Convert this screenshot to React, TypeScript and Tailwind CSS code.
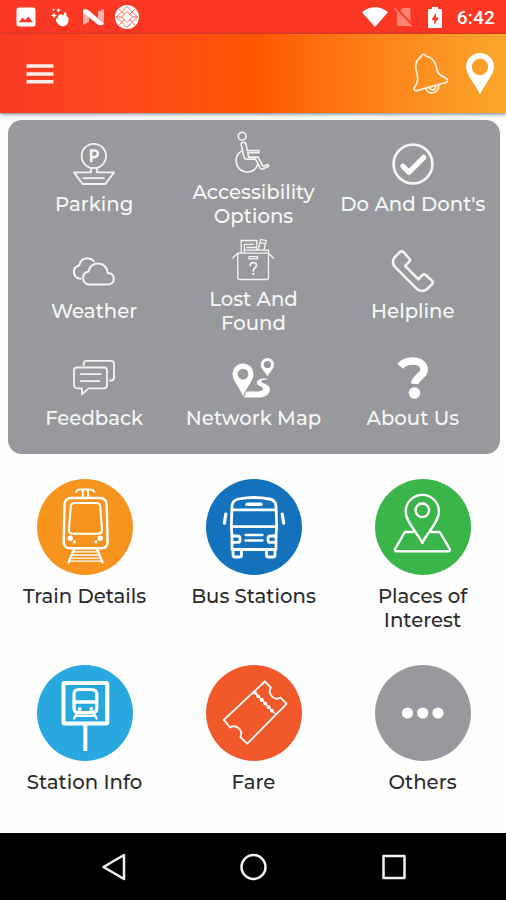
import type { ReactNode } from 'react';

type Item = {
  label: string[];
  icon: ReactNode;
};

type Service = Item & { color: string };

// 42x42 line icon used inside the grey panel
const PanelIcon = ({ width = 1.6, children }: { width?: number; children: ReactNode }) => (
  <svg
    className="h-[42px] w-[42px] shrink-0 overflow-visible"
    viewBox="0 0 42 42"
    fill="none"
    stroke="#f4f4f5"
    strokeWidth={width}
    strokeLinecap="round"
    strokeLinejoin="round"
  >
    {children}
  </svg>
);

// 96x96 icon drawn on the coloured discs
const DiscIcon = ({ width = 2.4, children }: { width?: number; children: ReactNode }) => (
  <svg
    className="h-24 w-24"
    viewBox="0 0 96 96"
    fill="none"
    stroke="#fff"
    strokeWidth={width}
    strokeLinecap="round"
    strokeLinejoin="round"
  >
    {children}
  </svg>
);

const quickLinks: Item[] = [
  {
    label: ['Parking'],
    icon: (
      <PanelIcon width={1.8}>
        <circle cx="20.8" cy="13" r="12.2" />
        <path d="M18.2 19.2V7.5h3.4a3.3 3.3 0 0 1 0 6.6h-3.4" strokeWidth="2.6" strokeLinecap="butt" strokeLinejoin="miter" />
        <path d="M18 25v4.4H1L9.6 41h22.8L41 29.4H24V25M10.4 35.2h20.4" />
      </PanelIcon>
    ),
  },
  {
    label: ['Accessibility', 'Options'],
    icon: (
      <PanelIcon width={1.6}>
        <circle cx="10.2" cy="5.3" r="3.9" />
        <path d="M11 11.3c-1.3.2-2 1.3-1.7 2.8L12 26.4c.3 1.2 1.1 1.7 2.2 1.7h9.3l4.7 9.1c.6 1.1 1.6 1.3 2.6.8l6-2.7-.9-1.8-5 2-4.7-9.4h-9.5l-.9-4.4h11v-2.1H15.3l-1.2-5.7c-.4-1.8-1.5-2.8-3.1-2.6z" />
        <path d="M9 20.4c-3.2 2.1-4.9 5.1-4.9 9C4.100 36 8.8 41 15.2 41c5.4 0 9.3-3.2 10.6-8.2" />
      </PanelIcon>
    ),
  },
  {
    label: ["Do And Dont's"],
    icon: (
      <PanelIcon width={2.7}>
        <circle cx="21" cy="21" r="19.4" />
        <path d="m10.9 23.2 5.9 6.1 15-15" strokeWidth="5.2" stroke="#fff" />
      </PanelIcon>
    ),
  },
  {
    label: ['Weather'],
    icon: (
      <PanelIcon width={2}>
        <path d="M16.2 34.5h18.9c3.2 0 5.7-2.5 5.7-5.6 0-3.3-2.4-5.6-6.1-5.8-.5-5.9-4.4-9.7-9.6-9.7-5 0-8.6 3.2-9.4 8.1-3.5.5-5.6 3-5.6 6.3 0 3.8 2.5 6.7 6.1 6.7z" />
        <path d="M7.5 28.7C3.500 28.1.9 25.5.9 21.9c0-3.3 1.9-5.6 5.2-6.3C7 11 10.1 8.2 14.2 8.2c2.7 0 5 1 6.7 3" />
      </PanelIcon>
    ),
  },
  {
    label: ['Lost And', 'Found'],
    icon: (
      <PanelIcon width={1.3}>
        <path d="M5.8 15.2h30.7v24.3c0 1.3-.7 2-2 2H7.8c-1.3 0-2-.7-2-2zM5.8 15.2.8 19.8M36.5 15.2l4.9 5" />
        <path d="M9.2 15V2.5h15.5V12M12.4 15V6.3h8.8M12.4 12.2h24.1v3M15 9.5h9" />
        <path d="m26.3 12 2.3-10.6 5.6 1.2L32 12M28 4.6l5.6 1.2" />
        <path d="M17 18.6h8.5v2.2H17z" />
        <path d="M18.2 27.6c0-4 6.3-4 6.3 0 0 2.5-3.2 2.4-3.2 5.2" strokeWidth="1.7" />
        <circle cx="21.3" cy="36" r=".6" />
      </PanelIcon>
    ),
  },
  {
    label: ['Helpline'],
    icon: (
      <PanelIcon width={2.6}>
        <path d="M2.7 7.3 7.5 2.3c1.4-1.3 3-1.3 4.3 0l5.6 6.5c1 1.2.9 2-.2 3.1l-4.1 4L26.4 29.3l3.9-4.1c1.1-1.1 2.2-1.2 3.4-.2l6.2 5.6c1.2 1.2 1.2 2.5 0 3.7l-5 4.9c-3 2.6-7.6 2.4-10.6-.8L3.3 17.2C.6 14.4.1 10.2 2.7 7.3z" />
      </PanelIcon>
    ),
  },
  {
    label: ['Feedback'],
    icon: (
      <PanelIcon width={1.8}>
        <path d="M4 10.5h27c1.8 0 3 1.2 3 3v14.8c0 1.8-1.2 3-3 3H15.6l-6.7 6v-6H4c-1.8 0-3-1.2-3-3V13.5c0-1.8 1.2-3 3-3z" />
        <path d="M10.6 8V6.8c0-1.8 1.2-3 3-3H38c1.8 0 3 1.2 3 3v13.8c0 1.8-1.2 3-3 3h-1.2" />
        <path d="M7.8 17.2h20M7.8 24.2h18.4" />
      </PanelIcon>
    ),
  },
  {
    label: ['Network Map'],
    icon: (
      <svg className="h-[42px] w-[42px] shrink-0" viewBox="0 0 42 42" fill="#fff" fillRule="evenodd">
        <path d="M11 6.5A10.5 10.5 0 0 0 .5 17c0 7 7.5 13.5 10.5 22.5C14 30.5 21.5 24 21.5 17A10.5 10.5 0 0 0 11 6.5zm0 5.2a5.4 5.4 0 1 1 0 10.8 5.4 5.4 0 0 1 0-10.8z" />
        <path d="M35.5.9A6.8 6.8 0 0 0 28.7 7.7c0 4.5 4.8 7 6.8 11.8 2-4.8 6.5-7.3 6.5-11.8A6.6 6.6 0 0 0 35.5.9zm0 3a3.7 3.7 0 1 1 0 7.4 3.7 3.7 0 0 1 0-7.4z" />
        <path d="M34.8 21.5c-5.4-.6-10.2 1-10 4.2.2 3.4 6.7 3.6 6.2 6.2-.4 2.1-4 2.7-8 2.5H14.2L12 40.5h12.5c8.5.2 13.3-2.6 13.5-8.5.1-4.6-9-5.5-8.8-7.7.1-1.2 2.3-1.7 5.6-1.6z" />
      </svg>
    ),
  },
  {
    label: ['About Us'],
    icon: (
      <PanelIcon width={7.6}>
        <path
          d="M8.2 9.3C11.3 5.4 15.5 4 20.5 4c6.7 0 11.7 3.2 11.7 8.7 0 6-8.8 7.3-9.5 14.2"
          stroke="#fff"
          strokeLinecap="butt"
        />
        <circle cx="22.5" cy="36" r="5.8" fill="#fff" stroke="none" />
      </PanelIcon>
    ),
  },
];

const services: Service[] = [
  {
    label: ['Train Details'],
    color: 'bg-[#f7941e]',
    icon: (
      <DiscIcon>
        <path d="M39 12.8c.8-1.5 1.8-2.3 3.5-2.3h11.2c1.7 0 2.7.8 3.5 2.3M45.8 10.5V18M51 10.5V18" strokeWidth="2" />
        <path d="M34.5 19h28c4.4 0 6.9 2.3 7.2 6.5l.9 37.2c0 4.2-2.4 6.5-6.5 6.5H33c-4.1 0-6.4-2.3-6.3-6.5l.8-37.2c.3-4.2 2.6-6.5 7-6.5z" />
        <path d="M37.5 24h22c2.4 0 3.6 1.2 3.8 3.6l1.7 22.8c.2 2.9-1.3 4.4-4 4.4H36c-2.7 0-4.2-1.5-4-4.4l1.7-22.8c.2-2.4 1.4-3.6 3.8-3.6z" strokeWidth="2.1" />
        <path d="m37.3 69.8-5.7 13.5M60 69.8l5.4 13.5" />
        <path d="M37 72.8h23.5M36 76h26M35 79.2h28M33.5 82.2h30" strokeWidth="1.3" />
        <g fill="#fff" stroke="none">
          <circle cx="33.3" cy="59.2" r="2.7" />
          <circle cx="37.5" cy="62.9" r="1.7" />
          <circle cx="63.2" cy="59.2" r="2.7" />
          <circle cx="59" cy="62.9" r="1.7" />
        </g>
      </DiscIcon>
    ),
  },
  {
    label: ['Bus Stations'],
    color: 'bg-[#1472bd]',
    icon: (
      <DiscIcon width={2.8}>
        <path d="M26 70.5V56l-.7-8.5.7-20.5c.3-4 2.7-6.2 6.5-7 10.5-2 20.5-2 31 0 3.8.8 6.2 3 6.5 7l.7 20.5L70 56v14.5z" />
        <path d="M26.5 30.8h43M25.5 47.7h45" />
        <path d="M41 25.2h14" strokeWidth="3.4" />
        <path d="M26 57h5.5c1.6 0 2.5.9 2.5 2.5v1.4c0 1.6-.9 2.5-2.5 2.5H26M70 57h-5.5c-1.6 0-2.5.9-2.5 2.5v1.4c0 1.6.9 2.5 2.5 2.5H70" />
        <path d="M39.5 56h17M39.5 61.5h17" strokeWidth="2.3" />
        <path d="M27 71v5c0 1.3.7 2 2 2h4.5c1.3 0 2-.7 2-2v-5M60.5 71v5c0 1.3.7 2 2 2H67c1.3 0 2-.7 2-2v-5" />
        <path d="m19.8 35-1.5 9.2M76.2 35l1.5 9.2" strokeWidth="3.2" />
      </DiscIcon>
    ),
  },
  {
    label: ['Places of', 'Interest'],
    color: 'bg-[#39b54a]',
    icon: (
      <DiscIcon>
        <path d="M47.3 64C43.5 55 30.7 43.5 30.7 32.5a16.6 16.6 0 0 1 33.2 0C63.9 43.5 51.1 55 47.3 64z" />
        <circle cx="47.3" cy="31.3" r="6.8" />
        <path d="M38.5 53h-8.7L20.2 69.8c-.7 1.4-.2 2.5 1.4 2.5h51.6c1.6 0 2.1-1.1 1.4-2.5L64.8 53h-8.5" />
      </DiscIcon>
    ),
  },
  {
    label: ['Station Info'],
    color: 'bg-[#29a8e0]',
    icon: (
      <DiscIcon width={4}>
        <rect x="26.5" y="18" width="43.8" height="40.5" rx="1" />
        <path d="M48.3 59v27" strokeLinecap="butt" />
        <path
          d="M42 24.5h12.8c3.3 0 5 2 5 5.3v13.4c0 2.8-1.4 4.3-4.3 4.3H41.3c-2.9 0-4.3-1.5-4.3-4.3V29.8c0-3.3 1.7-5.3 5-5.3z"
          strokeWidth="3.2"
        />
        <path d="M38 37h21" strokeWidth="3.4" />
        <path d="m39.5 49-2.3 4.5M57.3 49l2.3 4.5M39.5 50.8h17.8" strokeWidth="2.4" />
        <path d="M42.7 44v.1M54.3 44v.1" strokeWidth="4" />
      </DiscIcon>
    ),
  },
  {
    label: ['Fare'],
    color: 'bg-[#f1592a]',
    icon: (
      <DiscIcon width={1.8}>
        <path d="m17.8 54.9 41-38.4 6 6.2c-3.6 5.7 3.2 13.8 9.8 9.9l6 6.2-39.4 39.9-6.8-6.6c3-6.2-3.5-13.6-10.3-9.6z" />
        <path d="m48.8 27.6 20.6 21.6" strokeWidth="3.8" strokeDasharray="0.1 4.9" />
        <path d="m48.8 27.6 20.6 21.6" strokeWidth="1.2" />
      </DiscIcon>
    ),
  },
  {
    label: ['Others'],
    color: 'bg-[#97999d]',
    icon: (
      <DiscIcon>
        <g fill="#fff" stroke="none">
          <circle cx="32.5" cy="48" r="5.6" />
          <circle cx="47.7" cy="48" r="5.6" />
          <circle cx="63" cy="48" r="5.6" />
        </g>
      </DiscIcon>
    ),
  },
];

const StatusBar = () => (
  <div className="flex h-[34px] shrink-0 items-center justify-between bg-[#fb3824] pr-[11px] pl-4">
    <div className="flex items-center">
      <svg className="h-5 w-5" viewBox="0 0 20 20">
        <rect x=".5" y=".5" width="19" height="19" rx="2.5" fill="#fff" />
        <path d="m3 15.2 3.5-4.6 2.5 2.7 3.3-3.9 4.7 5.8z" fill="#fb3824" />
      </svg>
      <svg className="ml-[15px] h-5 w-[18px]" viewBox="0 0 18 20" fill="#fff">
        <path d="M8.8 7.5c1.5-1.2 2.5-.2 3.5 1l.8-2.3c.4-1.4 2.3-1 2.3.4v2.9c1.8.1 2.3 1.3 2.2 3-.2 4.8-3 7-6.4 6.8-3.4-.3-5.6-3.3-6.3-6.2-.3-1.5.8-2 1.8-1.3-.4-1.7.6-3.6 2.1-4.3z" />
        <path d="m3 5.5.9 2.1L6 8.5l-2.1.9L3 11.5l-.9-2.1L0 8.5l2.1-.9zM7.5 1l.7 1.6 1.6.7-1.6.7-.7 1.6-.7-1.6-1.6-.7 1.6-.7zM2.5 1l.5 1.2 1.2.5-1.2.5-.5 1.2L2 3.2.8 2.7 2 2.2z" />
      </svg>
      <svg className="ml-3.5 h-5 w-[21px]" viewBox="0 0 21 20" fill="#fff">
        <path d="m0 4 6 4.5V15L0 18zM21 2v14l-6-4.5V4.5z" opacity=".6" />
        <path d="M0 3.5C0 1.8 4 1.7 5.5 3.3L21 16.5c-1.2 2-4.5 2.5-6.2 1L0 5.5z" />
      </svg>
      <svg className="ml-[11px] h-6 w-6" viewBox="0 0 24 24">
        <circle cx="12" cy="12" r="12" fill="#fff" />
        <path
          d="m12 1.5 10.5 10.5L12 22.5 1.5 12zM12 6.5l5.5 5.5-5.5 5.5L6.5 12zM4 4l5.3 5.3M20 4l-5.3 5.3M4 20l5.3-5.3M20 20l-5.3-5.3M1 12h5.5M17.5 12H23"
          fill="none"
          stroke="#fb6a58"
          strokeWidth="1"
        />
      </svg>
    </div>
    <div className="flex items-center">
      <svg className="h-5 w-[26px]" viewBox="0 0 26 20" fill="#fff">
        <path d="M0 5.2C7.5-1.4 18.5-1.4 26 5.2L13 20z" />
      </svg>
      <svg className="ml-1.5 h-5 w-[19px]" viewBox="0 0 19 20">
        <path d="M8.5 1H15c1 0 1.5.5 1.5 1.5v15c0 1-.5 1.5-1.5 1.5H4.5C3.5 19 3 18.5 3 17.5V7z" fill="#fd8373" />
        <path d="M1.5.8 18.5 19" stroke="#fb3824" strokeWidth="3" />
        <path d="M.5 1.5 17.5 19.5" stroke="#fd8373" strokeWidth="1.5" />
      </svg>
      <svg className="ml-[15px] h-[21px] w-3.5" viewBox="0 0 14 21">
        <path d="M4 0h6v2h2.5C13.5 2 14 2.5 14 3.5v16c0 1-.5 1.5-1.5 1.5h-11C.5 21 0 20.5 0 19.5v-16C0 2.5.5 2 1.5 2H4z" fill="#fff" />
        <path d="M8 5.5 3.5 13H6.3v5l4.5-7.5H8z" fill="#fb3824" />
      </svg>
      <span className="ml-[15px] pt-0.5 font-['Roboto',sans-serif] text-[19px] leading-5 font-medium tracking-[0.2px] text-white">
        6:42
      </span>
    </div>
  </div>
);

const Header = () => (
  <header className="z-10 flex h-[79px] shrink-0 items-center justify-between bg-linear-to-r from-[#fb3a25] via-[#ff5500] to-[#f9a72b] pr-3 pl-[26px] shadow-[0_1px_4px_rgba(40,60,70,0.7)]">
    <svg className="h-5 w-7" viewBox="0 0 28 20" fill="#fdeeea">
      <path d="M.5.3h27v3.5H.5zM.5 8.2h27v3.5H.5zM.5 16h27v3.5H.5z" />
    </svg>
    <div className="flex items-center gap-[17px]">
      <svg
        className="h-[42px] w-9"
        viewBox="0 0 36 42"
        fill="none"
        stroke="#fff0e2"
        strokeWidth="1.7"
        strokeLinecap="round"
        strokeLinejoin="round"
      >
        <path d="M8 3.8C8.5 1.3 11.5.5 13 3c6 1.5 9.5 5.5 10.3 11.2.8 5.7 3 8 9.4 10.8 2.3 1 2.5 3.6.2 4.5L3.8 37.6c-2.5.5-3.4-1.5-2.1-3.3 3.6-5 4-8.6 2-14.4C1.5 13 3 7.5 8 3.8z" />
        <path d="M13 35.5c.8 6.5 13.3 6.5 12.7-3.2M16.5 34.8c1.6 3.5 6.5 2.5 6.2-1.5" />
      </svg>
      <svg className="h-[42px] w-7" viewBox="0 0 28 42" fill="#fff" fillRule="evenodd">
        <path d="M14 0A14 14 0 0 0 0 14c0 7.5 8.5 16 14 27.5C19.5 30 28 21.5 28 14A14 14 0 0 0 14 0zm0 5.8a8.2 8.2 0 1 1 0 16.4 8.2 8.2 0 0 1 0-16.4z" />
      </svg>
    </div>
  </header>
);

const Label = ({ lines }: { lines: string[] }) => (
  <span className="flex flex-col items-center text-[19.7px] leading-6 font-medium whitespace-nowrap">
    {lines.map((line) => (
      <span key={line}>{line}</span>
    ))}
  </span>
);

const QuickLinks = () => (
  <section className="mt-[7px] mr-[6.5px] ml-[7.5px] grid h-[334px] shrink-0 grid-cols-3 grid-rows-[107px_107px_107px] content-center rounded-[14px] bg-[#98999c] px-[7px] pb-px text-[#f7f7f8]">
    {quickLinks.map((item) => (
      <button key={item.label[0]} className="flex flex-col items-center justify-center gap-[7px]">
        {item.icon}
        <Label lines={item.label} />
      </button>
    ))}
  </section>
);

const Services = () => (
  <section className="-mr-px grid min-h-0 flex-1 grid-cols-3 grid-rows-[186px_1fr] pt-[24.5px] text-[#2b2b2b]">
    {services.map((item) => (
      <button key={item.label[0]} className="flex flex-col items-center justify-start gap-[9.5px]">
        <span className={`rounded-full ${item.color}`}>{item.icon}</span>
        <Label lines={item.label} />
      </button>
    ))}
  </section>
);

const NavBar = () => (
  <nav className="flex h-[67px] shrink-0 items-center justify-between bg-black px-[100px]">
    <svg className="h-7 w-7" viewBox="0 0 28 28" fill="none" stroke="#f2f2f2" strokeWidth="2.5" strokeLinejoin="round">
      <path d="M24 2v24L3.5 14z" />
    </svg>
    <svg className="h-7 w-7" viewBox="0 0 28 28" fill="none" stroke="#f2f2f2" strokeWidth="2.5">
      <circle cx="14.5" cy="14" r="12" />
    </svg>
    <svg className="h-7 w-7" viewBox="0 0 28 28" fill="none" stroke="#f2f2f2" strokeWidth="2.5" strokeLinejoin="round">
      <path d="M5.5 3h21v22h-21z" />
    </svg>
  </nav>
);

export default function App() {
  return (
    <div className="flex h-[900px] w-[506px] flex-col overflow-hidden bg-[#fefefe] font-['Montserrat','Inter',sans-serif]">
      <StatusBar />
      <Header />
      <QuickLinks />
      <Services />
      <NavBar />
    </div>
  );
}
